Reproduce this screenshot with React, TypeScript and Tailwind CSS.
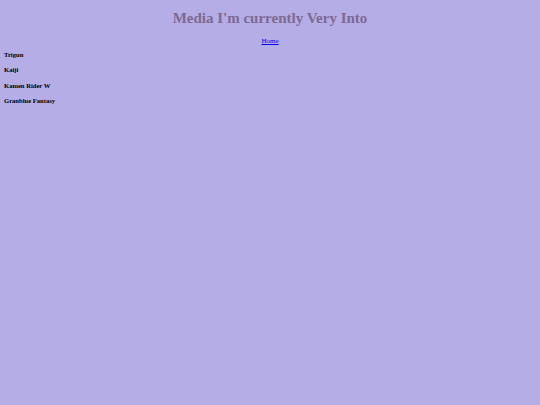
export default function App() {
  const items = ['Trigun', 'Kaiji', 'Kamen Rider W', 'Granblue Fantasy']

  return (
    <div className="min-h-screen bg-[#b4ade6] pt-[11px] font-['Liberation_Serif',serif] text-black">
      <h1 className="text-center text-[15px] leading-[15px] font-bold text-[#7b6a92]">
        Media I'm currently Very Into
      </h1>
      <div className="mt-[12px] text-center text-[7px] leading-[7px]">
        <a href="#" className="text-[#0000ee] underline">
          Home
        </a>
      </div>
      <div className="mt-[6px] flex flex-col gap-[8.4px] pl-[4px]">
        {items.map((item) => (
          <h5 key={item} className="text-[6.6px] leading-[7px] font-bold">
            {item}
          </h5>
        ))}
      </div>
    </div>
  )
}
